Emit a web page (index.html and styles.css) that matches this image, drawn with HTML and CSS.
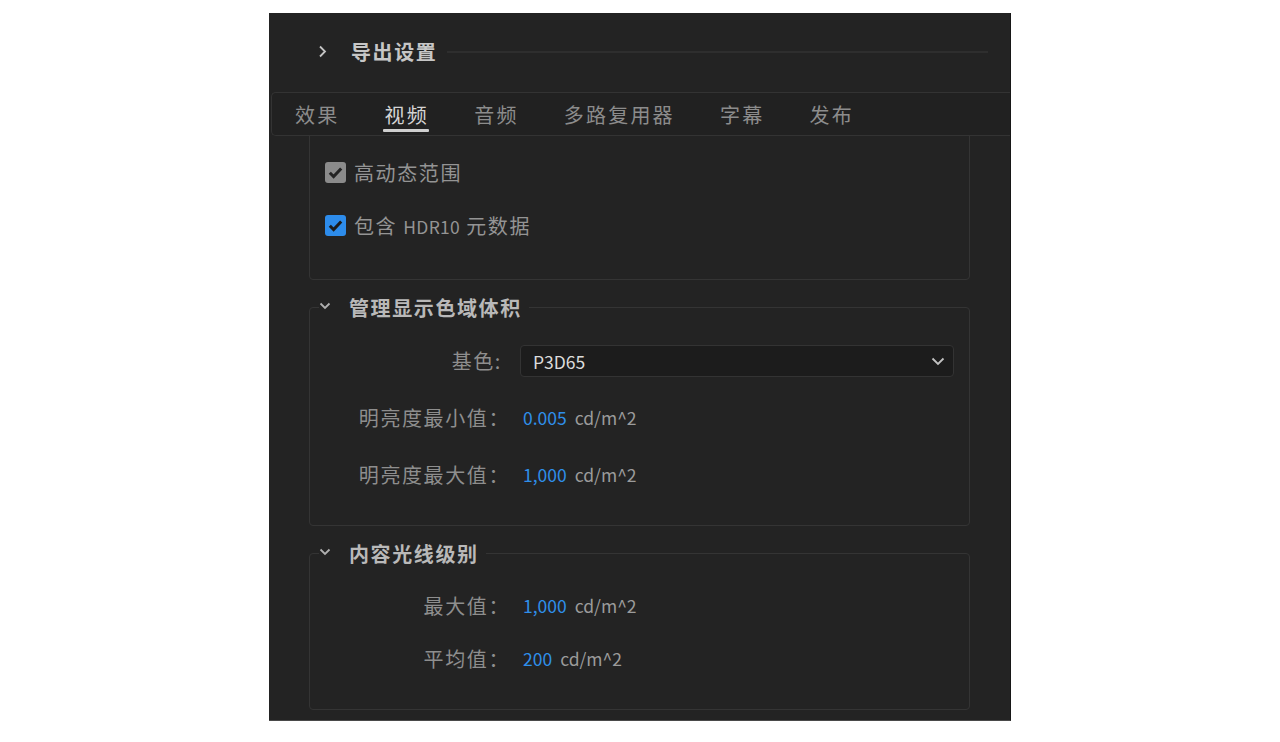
FILE: index.html
```html
<!DOCTYPE html>
<html lang="zh-CN">
<head>
<meta charset="utf-8">
<title>导出设置</title>
<link rel="stylesheet" href="styles.css">
</head>
<body>
<div class="panel">
  <div class="header">
    <svg class="chev-right" width="9" height="13" viewBox="0 0 9 13"><path d="M2 1.5 L7 6.5 L2 11.5" fill="none" stroke="#c4c4c4" stroke-width="1.8"/></svg>
    <span class="title">导出设置</span>
    <span class="rule"></span>
  </div>
  <div class="tabs">
    <span class="tab">效果</span>
    <span class="tab active">视频</span>
    <span class="tab">音频</span>
    <span class="tab">多路复用器</span>
    <span class="tab">字幕</span>
    <span class="tab">发布</span>
  </div>
  <div class="content">
    <div class="card">
      <div class="check-row">
        <span class="cb gray"><svg width="21" height="21" viewBox="0 0 21 21"><path d="M4.8 10.8 L8.6 14.6 L16.2 6.4" fill="none" stroke="#232323" stroke-width="3"/></svg></span>
        <span class="cb-label">高动态范围</span>
      </div>
      <div class="check-row">
        <span class="cb blue"><svg width="21" height="21" viewBox="0 0 21 21"><path d="M4.8 10.8 L8.6 14.6 L16.2 6.4" fill="none" stroke="#1c1c1c" stroke-width="3"/></svg></span>
        <span class="cb-label">包含 <span class="lat">HDR10</span> 元数据</span>
      </div>
    </div>

    <fieldset class="group">
      <legend><svg class="chev-down" width="12" height="8" viewBox="0 0 12 8"><path d="M1.5 1.5 L6 6 L10.5 1.5" fill="none" stroke="#b0b0b0" stroke-width="1.8"/></svg><span class="legend-text">管理显示色域体积</span></legend>
      <div class="fields">
        <span class="flabel half">基色:</span>
        <div class="select"><span class="select-text">P3D65</span><svg width="14" height="9" viewBox="0 0 14 9"><path d="M1.5 1.5 L7 7 L12.5 1.5" fill="none" stroke="#c2c2c2" stroke-width="1.8"/></svg></div>
        <span class="flabel">明亮度最小值：</span>
        <div class="value"><span class="num">0.005</span><span class="unit">cd/m^2</span></div>
        <span class="flabel">明亮度最大值：</span>
        <div class="value"><span class="num">1,000</span><span class="unit">cd/m^2</span></div>
      </div>
    </fieldset>

    <fieldset class="group">
      <legend><svg class="chev-down" width="12" height="8" viewBox="0 0 12 8"><path d="M1.5 1.5 L6 6 L10.5 1.5" fill="none" stroke="#b0b0b0" stroke-width="1.8"/></svg><span class="legend-text">内容光线级别</span></legend>
      <div class="fields tight">
        <span class="flabel">最大值：</span>
        <div class="value"><span class="num">1,000</span><span class="unit">cd/m^2</span></div>
        <span class="flabel">平均值：</span>
        <div class="value"><span class="num">200</span><span class="unit">cd/m^2</span></div>
      </div>
    </fieldset>
  </div>
</div>
</body>
</html>
```
FILE: styles.css
```css
body {
  margin: 0;
  background: #ffffff;
  font-family: "Noto Sans CJK SC", "Noto Sans", sans-serif;
}

.panel {
  margin: 13px 0 0 269px;
  width: 742px;
  height: 708px;
  box-sizing: border-box;
  background: #232323;
  border-right: 1px solid #171717;
  border-bottom: 1px solid #4a4a4a;
  display: flex;
  flex-direction: column;
  overflow: hidden;
}

.header {
  height: 79px;
  flex: none;
  box-sizing: border-box;
  display: flex;
  align-items: center;
  padding: 0 22px 2px 49px;
}

.chev-right {
  flex: none;
}

.title {
  margin-left: 24px;
  font-size: 20px;
  font-weight: 700;
  letter-spacing: 1.6px;
  color: #c6c6c6;
  line-height: 28px;
}

.rule {
  flex: 1;
  height: 2px;
  margin-left: 10px;
  background: #2e2e2e;
}

.tabs {
  height: 44px;
  flex: none;
  box-sizing: border-box;
  margin-left: 2px;
  border: 1px solid #333333;
  border-right: none;
  border-radius: 5px 0 0 5px;
  background: #212121;
  display: flex;
  padding-left: 23px;
  gap: 45.2px;
}

.tab {
  position: relative;
  display: flex;
  align-items: center;
  font-size: 20px;
  letter-spacing: 2.2px;
  color: #8c8c8c;
}

.tab.active {
  color: #d4d4d4;
}

.tab.active::after {
  content: "";
  position: absolute;
  left: -2px;
  right: 0;
  bottom: 3px;
  height: 3px;
  border-radius: 1px;
  background: #cfcfcf;
}

.content {
  flex: 1;
  min-height: 0;
  overflow: hidden;
  padding: 0 40px;
  display: flex;
  flex-direction: column;
}

.card {
  flex: none;
  margin-top: -20px;
  border: 1px solid #343434;
  border-radius: 4px;
  padding: 39px 0 38px 15px;
  display: flex;
  flex-direction: column;
  gap: 21px;
}

.check-row {
  height: 32px;
  display: flex;
  align-items: center;
  gap: 8px;
}

.cb {
  width: 21px;
  height: 21px;
  border-radius: 3px;
  display: flex;
  flex: none;
}

.cb.gray {
  background: #8b8b8b;
}

.cb.blue {
  background: #2d8ceb;
}

.cb-label {
  font-size: 20px;
  letter-spacing: 1.6px;
  color: #949494;
}

.lat {
  font-size: 17.5px;
  letter-spacing: 0.3px;
}

.group {
  flex: none;
  margin: 13px 0 0;
  padding: 0 0 34px;
  border: 1px solid #343434;
  border-radius: 4px;
  min-width: 0;
}

.group legend {
  margin-left: 9px;
  padding: 0 7px 0 0;
  height: 28px;
  display: flex;
  align-items: center;
}

.chev-down {
  flex: none;
  margin-top: -3px;
}

.legend-text {
  margin-left: 18px;
  font-size: 20px;
  font-weight: 700;
  letter-spacing: 1.6px;
  color: #b9b9b9;
}

.fields {
  display: grid;
  grid-template-columns: 200px 1fr;
  column-gap: 10px;
  row-gap: 25px;
  padding-top: 24px;
  align-items: center;
}

.fields.tight {
  row-gap: 21px;
  padding-top: 23px;
}

.flabel {
  text-align: right;
  font-size: 20px;
  letter-spacing: 1.6px;
  line-height: 32px;
  color: #8e8e8e;
}

.flabel.half {
  padding-right: 8px;
}

.select {
  height: 32px;
  box-sizing: border-box;
  margin-right: 15px;
  background: #1c1c1c;
  border: 1px solid #333333;
  border-radius: 4px;
  display: flex;
  align-items: center;
  justify-content: space-between;
  padding: 0 8px 0 12px;
}

.select-text {
  font-size: 17.5px;
  color: #dcdcdc;
}

.value {
  display: flex;
  align-items: center;
  gap: 8px;
  padding-left: 3px;
  font-size: 17.5px;
  line-height: 32px;
}

.num {
  color: #2f8fea;
}

.unit {
  color: #9b9b9b;
}
```
